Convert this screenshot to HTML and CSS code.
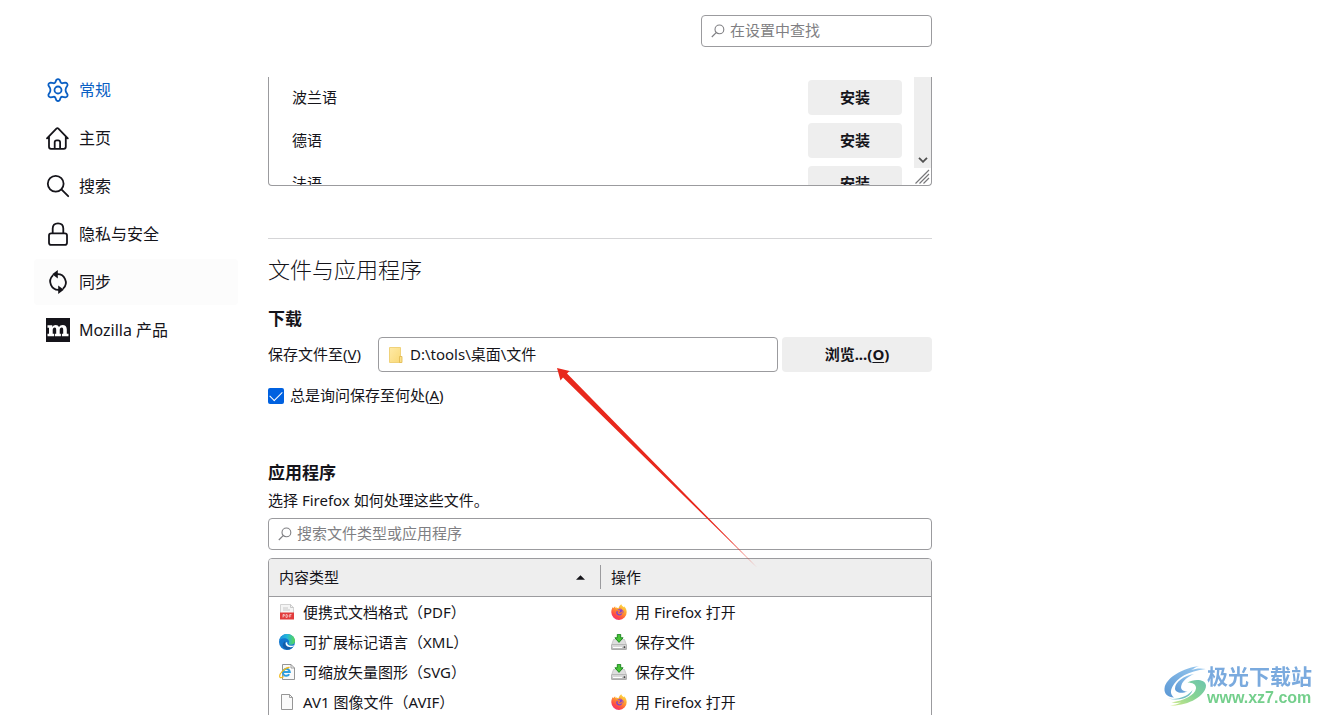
FILE: index.html
```html
<!DOCTYPE html>
<html lang="zh-CN">
<head>
<meta charset="utf-8">
<meta name="viewport" content="width=device-width, initial-scale=1">
<title>设置</title>
<link rel="stylesheet" href="styles.css">
</head>
<body>
<svg class="defs" width="0" height="0" aria-hidden="true">
  <defs>
    <linearGradient id="fx-body" x1="0.8" y1="0" x2="0.2" y2="1">
      <stop offset="0" stop-color="#ffe14a"/><stop offset="0.4" stop-color="#ff9a2e"/><stop offset="0.75" stop-color="#ff4a44"/><stop offset="1" stop-color="#e8308a"/>
    </linearGradient>
    <linearGradient id="edge-top" x1="0" y1="0.4" x2="1" y2="0.4">
      <stop offset="0" stop-color="#1a8fe0"/><stop offset="0.5" stop-color="#25b8d8"/><stop offset="1" stop-color="#5bd84f"/>
    </linearGradient>
    <linearGradient id="drive" x1="0" y1="0" x2="0" y2="1">
      <stop offset="0" stop-color="#f2f2f2"/><stop offset="1" stop-color="#a8a8a8"/>
    </linearGradient>
    <linearGradient id="folder" x1="0" y1="0" x2="1" y2="1">
      <stop offset="0" stop-color="#ffeaa6"/><stop offset="1" stop-color="#f9d978"/>
    </linearGradient>
    <linearGradient id="swirl-blue" x1="0" y1="1" x2="1" y2="0">
      <stop offset="0" stop-color="#5a97d4"/><stop offset="1" stop-color="#9ccbf0"/>
    </linearGradient>
    <linearGradient id="swirl-green" x1="0" y1="1" x2="1" y2="0">
      <stop offset="0" stop-color="#d3e98a"/><stop offset="0.5" stop-color="#86d493"/><stop offset="1" stop-color="#6cc4ae"/>
    </linearGradient>
    <symbol id="find" viewBox="0 0 14 14">
      <circle cx="8.4" cy="5.4" r="4.4" fill="none" stroke="currentColor" stroke-width="1.1"/>
      <path d="M5.2 8.6 0.8 13" fill="none" stroke="currentColor" stroke-width="1.2"/>
    </symbol>
    <symbol id="firefox" viewBox="0 0 16 16">
      <path d="M10.400.3c.3 1.400 1.400 2 2.400 3 .3-.2.3-.7.2-1.100 1.700 1.400 2.700 3.600 2.700 5.900a7.700 7.700 0 0 1-15.400.2c0-2 .5-3.800 1.700-5.200l.3 1.200c.5-.9 1.100-1.600 1.900-2.100-.1.700.1 1.300.4 1.800 1.100-.3 2.100-.1 2.900.4C8 2.600 8.800 1 10.400.3z" fill="url(#fx-body)"/>
      <path d="M4.600 4c1.100-.3 2.100-.1 2.900.4-.1.800-1.100 1-1.400 1.500z" fill="#ffb52e"/>
      <circle cx="8.300" cy="8.300" r="3.100" fill="#7b42d6"/>
      <path d="M4.500 6.900c1.300-.6 2.300-.3 3.600-.2.800.1.500.9-.4 1.200-.9.300-.7 1.600.7 1.700 1.300 0 2.100-.7 2.300-1.700" fill="none" stroke="#ff7b36" stroke-width="1.200"/>
      <path d="M8.300 5c2.700-.2 4 1.700 3.900 3.600" fill="none" stroke="#b04fb0" stroke-width="1"/>
    </symbol>
    <symbol id="save" viewBox="0 0 16 16">
      <path d="M2.500 5.500h11L15.500 11H.5z" fill="#dedede" stroke="#b5b5b5" stroke-width=".6"/>
      <rect x=".4" y="10.800" width="15.200" height="4.800" rx=".8" fill="url(#drive)" stroke="#8a8a8a" stroke-width=".6"/>
      <path d="M2 13.500h9" stroke="#fff" stroke-width="1"/>
      <rect x="12.700" y="12.300" width="1.500" height="1.600" fill="#3c3c3c"/>
      <path d="M6.300.4h3.400v3.400h2.400L8 8.400 3.900 3.800h2.400z" fill="#46c435" stroke="#16801b" stroke-width=".9"/>
    </symbol>
    <symbol id="gear" viewBox="0 0 24 24">
      <path d="M10.300 1.900Q12 .2 13.700 1.900L14.600 4.300Q15.300 5.400 16.600 5.200L19.200 4.700Q21.800 4.900 21.500 7.400L20 10Q19.200 12 20 14L21.500 16.500Q21.900 19 19.300 19.300L16.600 18.800Q15.300 18.600 14.600 19.700L13.700 22.100Q12 23.800 10.300 22.100L9.400 19.700Q8.700 18.600 7.400 18.800L4.700 19.300Q2.100 19 2.500 16.500L4 14Q4.800 12 4 10L2.500 7.500Q2.100 5 4.700 4.700L7.400 5.200Q8.700 5.400 9.400 4.300Z"/>
      <circle cx="12" cy="12" r="3.500"/>
    </symbol>
  </defs>
</svg>

<div class="page">
  <nav class="sidebar" aria-label="设置类别">
    <a class="nav-item is-active" href="#general">
      <svg class="nav-icon" viewBox="0 0 24 24"><use href="#gear"/></svg>
      <span>常规</span>
    </a>
    <a class="nav-item" href="#home">
      <svg class="nav-icon" viewBox="0 0 24 24"><path d="M1 12.300 10.400 2.600q1-1 2 0l9.400 9.700M3 10.800v10q0 2 2 2h12.800q2 0 2-2v-10M8.700 22.500v-6.200q0-2 2-2h1.400q2 0 2 2v6.200"/></svg>
      <span>主页</span>
    </a>
    <a class="nav-item" href="#search">
      <svg class="nav-icon" viewBox="0 0 24 24"><circle cx="9.700" cy="9.700" r="7.900"/><path d="m15.400 15.400 6.800 6.800"/></svg>
      <span>搜索</span>
    </a>
    <a class="nav-item" href="#privacy">
      <svg class="nav-icon" viewBox="0 0 24 24"><rect x="3" y="11.300" width="18" height="11.600" rx="2.200"/><path d="M6.700 11V6.500q0-5.200 5.300-5.200t5.300 5.200V11"/></svg>
      <span>隐私与安全</span>
    </a>
    <a class="nav-item is-hover" href="#sync">
      <svg class="nav-icon" viewBox="0 0 24 24"><path d="M11 4.200a8.300 8.300 0 0 1 6.300 14.200M13 19.800A8.300 8.300 0 0 1 6.700 5.600"/><path class="solid" d="M6.200 4.200 11.800 0v8.400zM17.800 19.800 12.200 24v-8.400z"/></svg>
      <span>同步</span>
    </a>
    <a class="nav-item" href="#more">
      <svg class="nav-icon" viewBox="0 0 24 24"><path class="solid" d="M0 0h24v24H0z"/><path class="knock" d="M1.500 7.200h4.800v1.900c.7-1.300 1.800-2.100 3.400-2.100s2.800.7 3.300 2.200C13.700 7.700 15 7 16.600 7c2.500 0 4.200 1.500 4.200 4.200v4.600h1.700v2.500h-6.600v-2.500h1.300v-4c0-1.500-.5-2.200-1.400-2.200-1.400 0-2.100 1-2.100 2.600v3.600h1.200v2.500H9v-2.500h1.200v-4c0-1.500-.5-2.200-1.400-2.200-1.400 0-2.100 1-2.100 2.600v3.600h1.500v2.500H1.500v-2.500H3V9.700H1.500z"/></svg>
      <span>Mozilla 产品</span>
    </a>
  </nav>

  <main class="content">
    <header class="topbar">
      <div class="field search-field">
        <svg class="find-icon" viewBox="0 0 14 14"><use href="#find"/></svg>
        <input type="search" aria-label="在设置中查找" placeholder="在设置中查找">
      </div>
    </header>

    <section class="languages" aria-label="语言">
      <ul class="language-list">
        <li><span>波兰语</span><button class="btn" type="button">安装</button></li>
        <li><span>德语</span><button class="btn" type="button">安装</button></li>
        <li><span>法语</span><button class="btn" type="button">安装</button></li>
      </ul>
      <div class="scroll-side" aria-hidden="true">
        <div class="scroll-track"><svg class="chevron" viewBox="0 0 10 6"><path d="m1 .8 4 4 4-4"/></svg></div>
        <svg class="resizer" viewBox="0 0 17 17"><path d="M1.500 15.500 15 2M5.500 15.500 15 6M9.500 15.500 15 10"/></svg>
      </div>
    </section>

    <h1>文件与应用程序</h1>

    <section class="downloads">
      <h2>下载</h2>
      <div class="save-row">
        <label for="folder-path">保存文件至(<u>V</u>)</label>
        <div class="field path-field">
          <svg class="folder-icon" viewBox="0 0 14 16"><path d="M.5.500h11v15H.5z" fill="url(#folder)" stroke="#f0d27a"/><path d="M10.500 9.500h2.500v6h-2.500z" fill="#fbe08a" stroke="#dfb84c" stroke-width=".8"/></svg>
          <input id="folder-path" type="text" value="D:\tools\桌面\文件" readonly>
        </div>
        <button class="btn browse" type="button">浏览...(<u>O</u>)</button>
      </div>
      <label class="ask"><input type="checkbox" checked><span>总是询问保存至何处(<u>A</u>)</span></label>
      <svg class="arrow" viewBox="0 0 200 200" aria-hidden="true"><path d="M0 0 12.500 3 10 5.500 200 199.500 6 9.500 3.500 12.500z"/></svg>
    </section>

    <section class="applications">
      <h2>应用程序</h2>
      <p>选择 Firefox 如何处理这些文件。</p>
      <div class="field filter-field">
        <svg class="find-icon" viewBox="0 0 14 14"><use href="#find"/></svg>
        <input type="search" aria-label="搜索文件类型或应用程序" placeholder="搜索文件类型或应用程序">
      </div>
      <div class="table-box">
        <table>
          <thead>
            <tr>
              <th scope="col"><div class="head-cell sorted"><span>内容类型</span><svg class="sort" viewBox="0 0 10 5"><path d="M0 5 5 0l5 5z"/></svg></div></th>
              <th scope="col"><div class="head-cell">操作</div></th>
            </tr>
          </thead>
          <tbody>
            <tr>
              <td><div class="cell"><svg class="icon" viewBox="0 0 16 16"><path d="M1.500.500h10l3 3v8h-13z" fill="#f5f5f5" stroke="#c9c9c9" stroke-width=".8"/><path d="M11.500.500v3h3M4 4h5M4 6h7" fill="none" stroke="#bcbcbc" stroke-width=".8"/><path d="M1 8.500h14v7H1z" fill="#e23b3b"/><path d="M4 13.500v-3h1.300v1.500H4M7 10.500v3q2 0 2-1.500t-2-1.500M10.700 13.500v-3h1.800M10.700 12h1.500" fill="none" stroke="#fff" stroke-width=".6"/></svg><span>便携式文档格式（PDF）</span></div></td>
              <td><div class="cell"><svg class="icon" viewBox="0 0 16 16"><use href="#firefox"/></svg><span>用 Firefox 打开</span></div></td>
            </tr>
            <tr>
              <td><div class="cell"><svg class="icon" viewBox="0 0 16 16"><circle cx="8" cy="8" r="8" fill="#1377cf"/><path d="M.2 7C.8 3 4 0 8 0c4.700 0 8 3.200 8 6.800 0 2.500-1.800 4-4 4-1.700 0-2.800-.7-2.200-1.600.6-1 .6-2.500-.8-3.700C6.500 3.400 1.700 3.900.2 7z" fill="url(#edge-top)"/><path d="M6.300 7c-1.500 3.300 1.200 7.300 7.700 6.200C10.500 17 5.300 16 4 12.500 3.200 10.200 4.300 8 6.300 7z" fill="#145ca8"/><path d="M8.200 8.100c-.7 2.600 2 4.700 6.900 3.200l-1.100 1.500c-4 1.300-8-.8-7.300-4z" fill="#fff"/></svg><span>可扩展标记语言（XML）</span></div></td>
              <td><div class="cell"><svg class="icon" viewBox="0 0 16 16"><use href="#save"/></svg><span>保存文件</span></div></td>
            </tr>
            <tr>
              <td><div class="cell"><svg class="icon" viewBox="0 0 16 16"><path d="M3.500.500h8.500l3.500 3.500v11.500h-12z" fill="#fafafa" stroke="#8a8a8a" stroke-width=".9"/><path d="M12 .5V4h3.500" fill="none" stroke="#8a8a8a" stroke-width=".8"/><path d="M10.200 10.300a3.500 3.500 0 1 1 .6-2.300H4" fill="none" stroke="#2f9fe0" stroke-width="2"/><path d="M.9 13.200C-.5 10 6 3.500 10.500 3.300M.9 13.200c1 .9 2.500.2 3.800-.7" fill="none" stroke="#f0b91f" stroke-width="1.200"/></svg><span>可缩放矢量图形（SVG）</span></div></td>
              <td><div class="cell"><svg class="icon" viewBox="0 0 16 16"><use href="#save"/></svg><span>保存文件</span></div></td>
            </tr>
            <tr>
              <td><div class="cell"><svg class="icon" viewBox="0 0 16 16"><path d="M2.500.500h8l3 3v12h-11z" fill="#fafafa" stroke="#8a8a8a" stroke-width=".9"/><path d="M10.500.500v3h3" fill="none" stroke="#8a8a8a" stroke-width=".8"/></svg><span>AV1 图像文件（AVIF）</span></div></td>
              <td><div class="cell"><svg class="icon" viewBox="0 0 16 16"><use href="#firefox"/></svg><span>用 Firefox 打开</span></div></td>
            </tr>
          </tbody>
        </table>
      </div>
    </section>
  </main>
</div>

<aside class="watermark">
  <svg class="swirl" viewBox="0 0 42 42" aria-hidden="true">
    <path d="M35 1C20 3 2 12 .5 23.500 0 29 4 32 10 32.500 6.500 30 6 26 8.500 21.500 13 13 24 6 42 4 36 3 32 3.500 27 5 30 3.500 32 2 35 1z" fill="url(#swirl-blue)"/>
    <path d="M30 9C20 10.500 11 17 11 23.500c0 4 6 5.500 12.500 3-5 0-7.500-2.500-6-6.500C19 15.500 24 11.500 30 9z" fill="url(#swirl-blue)"/>
    <path d="M23.500 17.500C30 13.500 41.500 14 42 20.500 42 31 23 41.500 6 40.500c4-.5 8-1.500 11-3-3.500.5-6.500.5-9.500 0C20 35.500 31 30 32 23.500c.5-4-3.500-6-8.500-6z" fill="url(#swirl-green)"/>
    <path d="M4 33.500c10 2 21-3 24.500-8.500C27 32 17 36.500 4 33.500z" fill="#73bfc4"/>
  </svg>
  <div class="mark-text">
    <strong>极光下载站</strong>
    <span>www.xz7.com</span>
  </div>
</aside>
</body>
</html>
```

FILE: styles.css
```css
* { box-sizing: border-box; }

:root {
  --text: #15141a;
  --line: #9b9b9e;
  --muted: #7f7f83;
  --surface: #eeeeee;
  --accent: #0061e0;
}

body {
  margin: 0;
  height: 100vh;
  overflow: hidden;
  background: #fff;
  color: var(--text);
  font: 15px/20px "Noto Sans", "Noto Sans CJK SC", sans-serif;
}

h1, h2, p, ul { margin: 0; padding: 0; }

button, input {
  font: inherit;
  color: inherit;
}

u {
  text-decoration-thickness: 1px;
  text-underline-offset: 2px;
}

.defs { position: absolute; }

.page {
  display: grid;
  grid-template-columns: 204px minmax(0, 664px);
  column-gap: 30px;
  padding: 0 34px;
}

/* Sidebar */
.sidebar {
  display: flex;
  flex-direction: column;
  gap: 2px;
  padding-top: 67px;
}

.nav-item {
  display: flex;
  align-items: center;
  gap: 9px;
  height: 46px;
  padding: 0 12px;
  border-radius: 4px;
  color: inherit;
  font-size: 16px;
  text-decoration: none;
}

.nav-item.is-active { color: #0a5fc4; }
.nav-item.is-hover { background: #fcfcfc; }

.nav-icon {
  width: 24px;
  height: 24px;
  fill: none;
  stroke: currentColor;
  stroke-width: 1.8;
  stroke-linecap: round;
  stroke-linejoin: round;
}

.nav-icon .solid { fill: currentColor; stroke: none; }
.nav-icon .knock { fill: #fff; stroke: none; }

/* Fields and buttons */
.topbar {
  display: flex;
  justify-content: flex-end;
  padding: 15px 0 30px;
}

.field {
  display: flex;
  align-items: center;
  gap: 5px;
  height: 32px;
  padding: 0 9px;
  border: 1px solid var(--line);
  border-radius: 4px;
  background: #fff;
}

.field input {
  flex: 1;
  min-width: 0;
  padding: 0 0 2px;
  border: 0;
  outline: 0;
  background: none;
}

.field input::placeholder { color: var(--muted); opacity: 1; }

.search-field { width: 231px; }

.find-icon {
  width: 14px;
  height: 14px;
  color: var(--muted);
}

.btn {
  height: 35px;
  padding: 0 16px 2px;
  border: 0;
  border-radius: 4px;
  background: var(--surface);
  font-weight: 700;
}

/* Language list */
.languages {
  display: flex;
  height: 109px;
  overflow: hidden;
  border: 1px solid var(--line);
  border-top: 0;
  border-radius: 0 0 4px 4px;
}

.language-list {
  flex: 1;
  display: flex;
  flex-direction: column;
  gap: 8px;
  padding: 3px 12px 0 23px;
  list-style: none;
}

.language-list li {
  display: flex;
  align-items: center;
  justify-content: space-between;
}

.language-list span { padding-bottom: 2px; }

.language-list .btn { width: 94px; }

.scroll-side {
  display: flex;
  flex-direction: column;
  width: 17px;
}

.scroll-track {
  flex: 1;
  display: flex;
  align-items: flex-end;
  justify-content: center;
  padding-bottom: 5px;
  background: var(--surface);
}

.chevron {
  width: 10px;
  height: 6px;
  fill: none;
  stroke: #505050;
  stroke-width: 1.8;
}

.resizer {
  width: 17px;
  height: 17px;
  fill: none;
  stroke: #77777a;
  stroke-width: 1.2;
}

/* Sections */
h1 {
  margin-top: 52px;
  padding-top: 15px;
  border-top: 1px solid #d5d5d7;
  font-size: 22px;
  font-weight: 300;
  line-height: 30px;
}

h2 {
  font-size: 17px;
  font-weight: 700;
  line-height: 24px;
}

.downloads {
  position: relative;
  padding-top: 23px;
}

.save-row {
  display: flex;
  align-items: center;
  gap: 4px;
  margin-top: 6px;
}

.save-row label {
  width: 106px;
  padding-bottom: 2px;
}

.path-field {
  flex: 1;
  gap: 7px;
  height: 35px;
  padding: 0 10px;
}

.folder-icon { width: 14px; height: 16px; }

.browse { width: 150px; }

.ask {
  display: flex;
  align-items: center;
  gap: 6px;
  width: fit-content;
  margin-top: 13px;
}

.ask span { padding-bottom: 2px; }

.ask input {
  appearance: none;
  width: 16px;
  height: 16px;
  margin: 0;
  border-radius: 2px;
  background: var(--accent);
  display: grid;
  place-items: center;
}

.ask input:checked::before {
  content: "";
  width: 11px;
  height: 6px;
  margin-bottom: 3px;
  border: solid #fff;
  border-width: 0 0 1px 1px;
  rotate: -45deg;
}

/* Pointer drawn over the page */
.arrow {
  position: absolute;
  top: 84px;
  left: 289px;
  width: 200px;
  height: 200px;
  fill: #e8281c;
  pointer-events: none;
}

.applications { padding-top: 54px; }

.applications p { margin-top: 5px; }

.filter-field { margin-top: 8px; }

/* Content types */
.table-box {
  margin-top: 8px;
  overflow: hidden;
  border: 1px solid var(--line);
  border-radius: 4px 4px 0 0;
}

table {
  width: 100%;
  border-collapse: collapse;
  table-layout: fixed;
}

th, td {
  padding: 0;
  text-align: left;
  font-weight: 400;
}

th:first-child { width: 332px; }

thead {
  background: var(--surface);
  border-bottom: 1px solid var(--line);
}

th { height: 37px; }

.head-cell {
  display: flex;
  align-items: center;
  justify-content: space-between;
  height: 24px;
  padding: 0 10px;
}

.head-cell.sorted {
  padding-right: 15px;
  border-right: 1px solid var(--line);
}

.sort { width: 9px; height: 5px; fill: var(--text); }

.cell {
  display: flex;
  align-items: center;
  gap: 8px;
  height: 30px;
  padding: 0 10px;
}

.icon { width: 16px; height: 16px; }

/* Corner mark */
.watermark {
  position: fixed;
  right: 12px;
  bottom: 7px;
  display: flex;
  align-items: center;
  gap: 1px;
}

.swirl { width: 42px; height: 42px; }

.mark-text {
  display: flex;
  flex-direction: column;
}

.mark-text strong {
  color: #7aaade;
  font-size: 21px;
  line-height: 24px;
}

.mark-text span {
  color: #74cf8c;
  font: 700 16px/20px "Liberation Sans", sans-serif;
}
```
